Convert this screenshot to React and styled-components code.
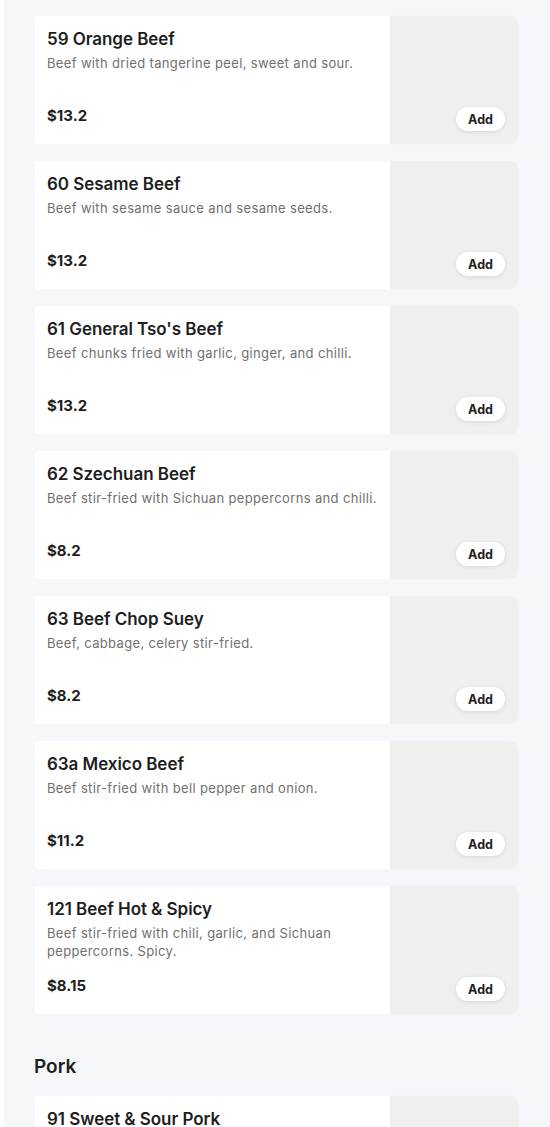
import React from "react";
import styled, { createGlobalStyle } from "styled-components";

const Global = createGlobalStyle`
  html, body { margin: 0; padding: 0; background: #ffffff; }
  body { font-family: Inter, "Noto Sans", sans-serif; -webkit-font-smoothing: antialiased; }
  * { box-sizing: border-box; }
`;

const Page = styled.div`
  margin-left: 4px;
  background: #f6f7fb;
  padding: 16px 32px 40px 31px;
  min-height: 1127px;
`;

const List = styled.div`
  display: flex;
  flex-direction: column;
  gap: 17px;
`;

const Card = styled.div`
  display: flex;
  height: 128px;
  background: #ffffff;
  border-radius: 3px 8px 8px 3px;
`;

const Info = styled.div`
  flex: 1;
  min-width: 0;
  display: flex;
  flex-direction: column;
  padding: 12px 10px 19px 12px;
`;

const Title = styled.div`
  font-size: 17px;
  line-height: 22px;
  font-weight: 600;
  color: #1e1e1e;
  letter-spacing: -0.05px;
`;

const Desc = styled.div`
  margin-top: 4px;
  font-size: 13px;
  line-height: 18px;
  letter-spacing: 0.35px;
  color: #707070;
`;

const Price = styled.div`
  margin-top: auto;
  font-size: 15px;
  line-height: 18px;
  font-weight: 700;
  color: #1e1e1e;
`;

const Thumb = styled.div`
  position: relative;
  width: 128px;
  flex: none;
  background: #efefef;
  border-radius: 0 8px 8px 0;
  box-shadow: 0 0 3px rgba(0, 0, 0, 0.03);
`;

const AddButton = styled.button`
  position: absolute;
  right: 13px;
  bottom: 13px;
  width: 49px;
  height: 24px;
  border: none;
  border-radius: 12px;
  background: #ffffff;
  box-shadow: 0 1px 4px rgba(0, 0, 0, 0.1);
  font-family: Inter, "Noto Sans", sans-serif;
  font-size: 12.5px;
  font-weight: 700;
  color: #1e1e1e;
  padding: 0;
  cursor: pointer;
`;

const SectionTitle = styled.h2`
  margin: 41px 0 17px -1px;
  font-size: 19px;
  line-height: 24px;
  font-weight: 600;
  color: #1e1e1e;
`;

const beef = [
  { name: "59 Orange Beef", desc: "Beef with dried tangerine peel, sweet and sour.", price: "$13.2" },
  { name: "60 Sesame Beef", desc: "Beef with sesame sauce and sesame seeds.", price: "$13.2" },
  { name: "61 General Tso's Beef", desc: "Beef chunks fried with garlic, ginger, and chilli.", price: "$13.2" },
  { name: "62 Szechuan Beef", desc: "Beef stir-fried with Sichuan peppercorns and chilli.", price: "$8.2" },
  { name: "63 Beef Chop Suey", desc: "Beef, cabbage, celery stir-fried.", price: "$8.2" },
  { name: "63a Mexico Beef", desc: "Beef stir-fried with bell pepper and onion.", price: "$11.2" },
  { name: "121 Beef Hot & Spicy", desc: "Beef stir-fried with chili, garlic, and Sichuan peppercorns. Spicy.", price: "$8.15" },
];

const pork = [
  { name: "91 Sweet & Sour Pork", desc: "Pork in sweet and sour sauce.", price: "$11.2" },
];

function Item({ item }) {
  return (
    <Card>
      <Info>
        <Title>{item.name}</Title>
        <Desc>{item.desc}</Desc>
        <Price>{item.price}</Price>
      </Info>
      <Thumb>
        <AddButton>Add</AddButton>
      </Thumb>
    </Card>
  );
}

export default function App() {
  return (
    <>
      <Global />
      <Page>
        <List>
          {beef.map((it) => (
            <Item key={it.name} item={it} />
          ))}
        </List>
        <SectionTitle>Pork</SectionTitle>
        <List>
          {pork.map((it) => (
            <Item key={it.name} item={it} />
          ))}
        </List>
      </Page>
    </>
  );
}
